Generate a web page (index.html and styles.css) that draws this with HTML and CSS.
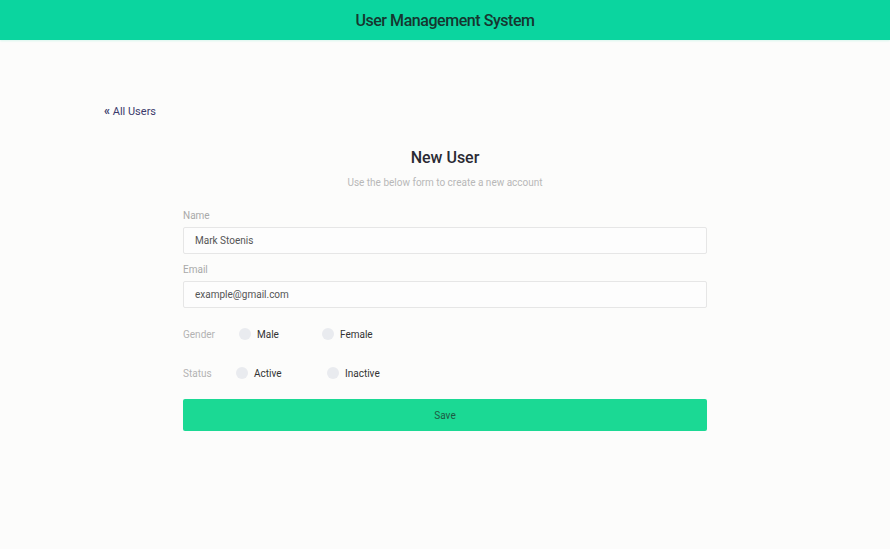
FILE: index.html
```html
<!DOCTYPE html>
<html>
<head>
<meta charset="utf-8">
<link rel="stylesheet" href="styles.css">
</head>
<body>
<header class="topbar"><h1 class="brand">User Management System</h1></header>
<main class="page">
  <a class="back" href="#"><span class="chev">«</span> All Users</a>
  <section class="card">
    <h2 class="title">New User</h2>
    <p class="subtitle">Use the below form to create a new account</p>
    <form class="form">
      <label class="lbl">Name</label>
      <div class="input">Mark Stoenis</div>
      <label class="lbl lbl2">Email</label>
      <div class="input">example@gmail.com</div>
      <div class="radio-row row-gender">
        <span class="rlbl">Gender</span>
        <span class="opt opt-male"><span class="dot"></span>Male</span>
        <span class="opt"><span class="dot"></span>Female</span>
      </div>
      <div class="radio-row row-status">
        <span class="rlbl">Status</span>
        <span class="opt opt-active"><span class="dot"></span>Active</span>
        <span class="opt"><span class="dot"></span>Inactive</span>
      </div>
      <div class="btn">Save</div>
    </form>
  </section>
</main>
</body>
</html>
```
FILE: styles.css
```css
* { box-sizing: border-box; }
html, body { margin: 0; padding: 0; }
body {
  background: #fcfcfb;
  font-family: Roboto, "Liberation Sans", sans-serif;
  width: 890px;
  height: 549px;
  overflow: hidden;
}
.topbar {
  height: 40px;
  background: #0bd59f;
  display: flex;
  align-items: center;
  justify-content: center;
  box-shadow: 0 1px 2px rgba(11,213,159,0.15);
}
.brand {
  margin: 0;
  font-family: Roboto, sans-serif;
  font-weight: 500;
  font-size: 16px;
  letter-spacing: -0.45px;
  color: #16362f;
}
.page {
  padding: 60px 0 0 104px;
}
.back {
  display: inline-block;
  font-size: 11px;
  color: #3b3a6b;
  text-decoration: none;
  line-height: 14px;
}
.chev { font-weight: 700; font-size: 12px; }
.card {
  width: 524px;
  margin: 29px 0 0 79px;
}
.title {
  margin: 0;
  text-align: center;
  font-size: 16px;
  font-weight: 500;
  color: #2a2a33;
  line-height: 20px;
}
.subtitle {
  margin: 9px 0 0;
  text-align: center;
  font-size: 10px;
  color: #b8b8b8;
  line-height: 12px;
}
.form { margin-top: 21px; display: flex; flex-direction: column; }
.lbl { font-size: 10px; color: #a9a9a9; line-height: 12px; }
.lbl2 { margin-top: 10px; }
.input {
  margin-top: 5px;
  height: 27px;
  border: 1px solid #e6e6e6;
  border-radius: 2px;
  background: #fdfdfd;
  font-size: 10px;
  color: #555;
  padding-left: 11px;
  display: flex;
  align-items: center;
}
.radio-row {
  display: flex;
  align-items: center;
  height: 14px;
  font-size: 10px;
  color: #333;
}
.row-gender { margin-top: 19px; }
.row-status { margin-top: 25px; }
.rlbl { color: #b3b3b3; width: 56px; }
.row-status .rlbl { width: 53px; }
.opt { display: flex; align-items: center; }
.opt-male { width: 83px; }
.opt-active { width: 91px; }
.dot {
  width: 12px; height: 12px;
  border-radius: 50%;
  background: #e9ebef;
  margin-right: 6px;
}
.btn {
  margin-top: 19px;
  height: 32px;
  background: #1bd994;
  border-radius: 2px;
  display: flex;
  align-items: center;
  justify-content: center;
  font-size: 10px;
  color: #1d5a43;
}
```
